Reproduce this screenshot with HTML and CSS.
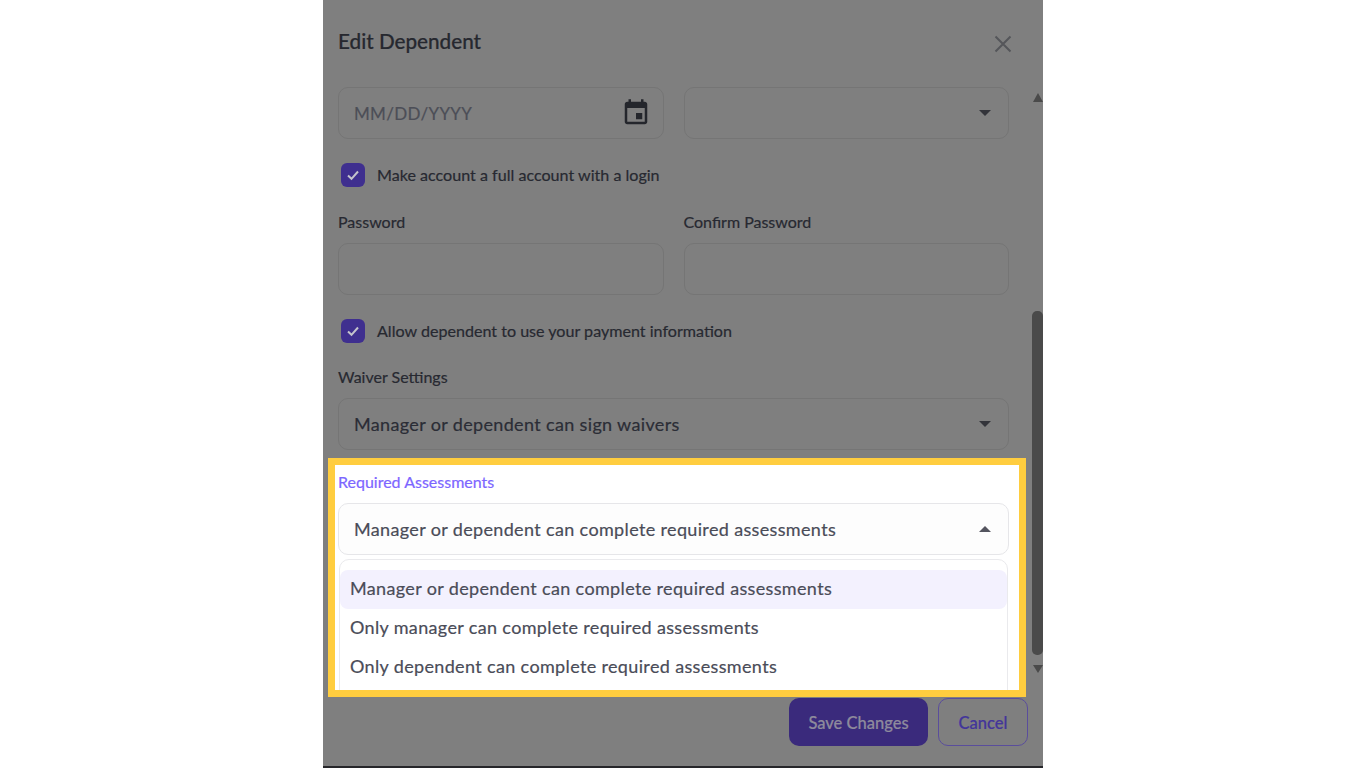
FILE: index.html
```html
<!DOCTYPE html>
<html lang="en">
<head>
<meta charset="utf-8">
<title>Edit Dependent</title>
<link rel="stylesheet" href="styles.css">
</head>
<body>
<div class="modal">
  <header class="modal-head">
    <h1 class="title">Edit Dependent</h1>
    <svg class="close" viewBox="0 0 18 18" aria-hidden="true"><path d="M1.500 1.500 16.500 16.500M16.500 1.500 1.500 16.500"/></svg>
  </header>
  <div class="main">
    <div class="form">
      <div class="row">
        <div class="field">
          <span class="placeholder">MM/DD/YYYY</span>
          <svg class="cal" viewBox="0 0 24 24" aria-hidden="true"><path d="M17 12h-5v5h5v-5zM16 1v2H8V1H6v2H5c-1.110 0-1.990.9-1.990 2L3 19c0 1.100.89 2 2 2h14c1.100 0 2-.9 2-2V5c0-1.100-.9-2-2-2h-1V1h-2zm3 18H5V8h14v11z"/></svg>
        </div>
        <div class="field"><span></span><i class="caret"></i></div>
      </div>
      <div class="check check-first">
        <span class="box"><svg viewBox="0 0 24 24" aria-hidden="true"><path d="M7 12.500 10.500 15.800 17 8.500"/></svg></span>
        <span class="check-text">Make account a full account with a login</span>
      </div>
      <div class="row row-labels">
        <div class="col"><label class="label">Password</label><div class="field"></div></div>
        <div class="col"><label class="label">Confirm Password</label><div class="field"></div></div>
      </div>
      <div class="check check-second">
        <span class="box"><svg viewBox="0 0 24 24" aria-hidden="true"><path d="M7 12.500 10.500 15.800 17 8.500"/></svg></span>
        <span class="check-text">Allow dependent to use your payment information</span>
      </div>
      <label class="label label-waiver">Waiver Settings</label>
      <div class="field"><span class="value">Manager or dependent can sign waivers</span><i class="caret"></i></div>
    </div>
    <div class="scrollbar">
      <i class="arrow-up"></i>
      <i class="thumb"></i>
      <i class="arrow-down"></i>
    </div>
  </div>
  <footer class="modal-foot">
    <button class="btn btn-save" type="button">Save Changes</button>
    <button class="btn btn-cancel" type="button">Cancel</button>
  </footer>
  <section class="highlight">
    <label class="label label-active">Required Assessments</label>
    <div class="field field-open"><span class="value value-light">Manager or dependent can complete required assessments</span><i class="caret caret-up"></i></div>
    <ul class="menu">
      <li class="option option-on">Manager or dependent can complete required assessments</li>
      <li class="option">Only manager can complete required assessments</li>
      <li class="option">Only dependent can complete required assessments</li>
    </ul>
  </section>
</div>
</body>
</html>
```
FILE: styles.css
```css
* { box-sizing: border-box; }
html, body { margin: 0; height: 100%; }
body {
  background: #fff;
  display: flex;
  justify-content: center;
  font-family: "Lato", "Liberation Sans", sans-serif;
  -webkit-text-stroke: .2px;
  overflow: hidden;
}
.modal {
  position: relative;
  width: 720px;
  height: 768px;
  background: #7f7f7f;
  border-bottom: 2px solid #26262a;
  display: flex;
  flex-direction: column;
}
.modal-head {
  height: 87px;
  flex: none;
  display: flex;
  justify-content: space-between;
  align-items: flex-start;
  padding: 26px 31px 0 15px;
}
.title {
  margin: 0;
  font-size: 20.700px;
  line-height: 30px;
  font-weight: 500;
  color: #26282f;
}
.close { width: 18px; height: 18px; margin-top: 9px; }
.close path { fill: none; stroke: #55565a; stroke-width: 2; }
.main { flex: 1; display: flex; min-height: 0; }
.form { width: 671px; margin-left: 15px; display: flex; flex-direction: column; }
.row { display: flex; gap: 20px; }
.row > * { flex: 1; min-width: 0; }
.field {
  height: 52px;
  border: 1.500px solid #757575;
  border-radius: 10px;
  padding: 0 15px;
  display: flex;
  align-items: center;
  justify-content: space-between;
  flex: none;
}
.row > .field { flex: 1; }
.placeholder { font-size: 17px; letter-spacing: .3px; color: #4c4e57; }
.cal { width: 30px; height: 30px; margin-right: -3px; fill: #24262c; }
.caret {
  width: 0; height: 0;
  margin-right: 2px;
  border-left: 6px solid transparent;
  border-right: 6px solid transparent;
  border-top: 6px solid #33343a;
}
.caret-up { border-top: 0; border-bottom: 6px solid #54555f; }
.check { display: flex; align-items: center; gap: 12px; padding-left: 3px; }
.check-first { margin-top: 24px; }
.check-second { margin-top: 24px; }
.box {
  width: 24px; height: 24px;
  background: #3f2f8f;
  border-radius: 6px;
  display: flex;
  flex: none;
}
.box path { fill: none; stroke: #c4c4cc; stroke-width: 2; }
.check-text { font-size: 16.100px; line-height: 24px; color: #272931; }
.row-labels { margin-top: 23px; }
.col { display: flex; flex-direction: column; }
.label { display: block; font-size: 16px; line-height: 24px; margin-bottom: 9px; color: #272931; }
.label-waiver { margin-top: 22px; margin-bottom: 9px; }
.value { font-size: 18px; letter-spacing: .35px; color: #2b2d36; }
.scrollbar { width: 11px; margin-left: 23px; display: flex; flex-direction: column; align-items: center; padding-top: 6px; }
.arrow-up { width: 0; height: 0; border-left: 5.500px solid transparent; border-right: 5.500px solid transparent; border-bottom: 9px solid #4a4a4a; }
.thumb { width: 11px; height: 344px; margin-top: 209px; background: #4a4a4a; border-radius: 5px; }
.arrow-down { width: 0; height: 0; margin-top: 10px; border-left: 5.500px solid transparent; border-right: 5.500px solid transparent; border-top: 8px solid #4a4a4a; }
.modal-foot { flex: none; height: 76px; display: flex; justify-content: flex-end; gap: 10px; padding: 8px 15px 0 0; }
.btn {
  height: 48px;
  padding: 2px 0 0;
  border-radius: 10px;
  font: 500 16.500px "Lato", "Liberation Sans", sans-serif;
}
.btn-save { width: 139px; background: #3a2a7c; border: 0; color: #8e8a9c; }
.btn-cancel { width: 90px; background: transparent; border: 1.500px solid #5a4d9c; color: #43359a; }
.highlight {
  position: absolute;
  left: 5px;
  top: 458px;
  width: 698px;
  height: 239px;
  border: 7px solid #ffcd3f;
  background: #fff;
  padding: 5px 3px 0;
  overflow: hidden;
}
.label-active { margin: 0 0 9px; color: #7d66ff; }
.field-open { width: 671px; border-color: #e6e6e9; background: #fdfdfd; }
.value-light { color: #4a4c58; }
.menu {
  list-style: none;
  margin: 4px 0 0 1px;
  padding: 10px 0 0;
  width: 669px;
  height: 140px;
  border: 1.500px solid #eaeaed;
  border-radius: 10px 10px 0 0;
}
.option {
  height: 39px;
  line-height: 37px;
  padding-left: 10px;
  font-size: 18px;
  letter-spacing: .35px;
  color: #4a4c58;
}
.option-on { background: #f3f1fe; border-radius: 8px; }
```
